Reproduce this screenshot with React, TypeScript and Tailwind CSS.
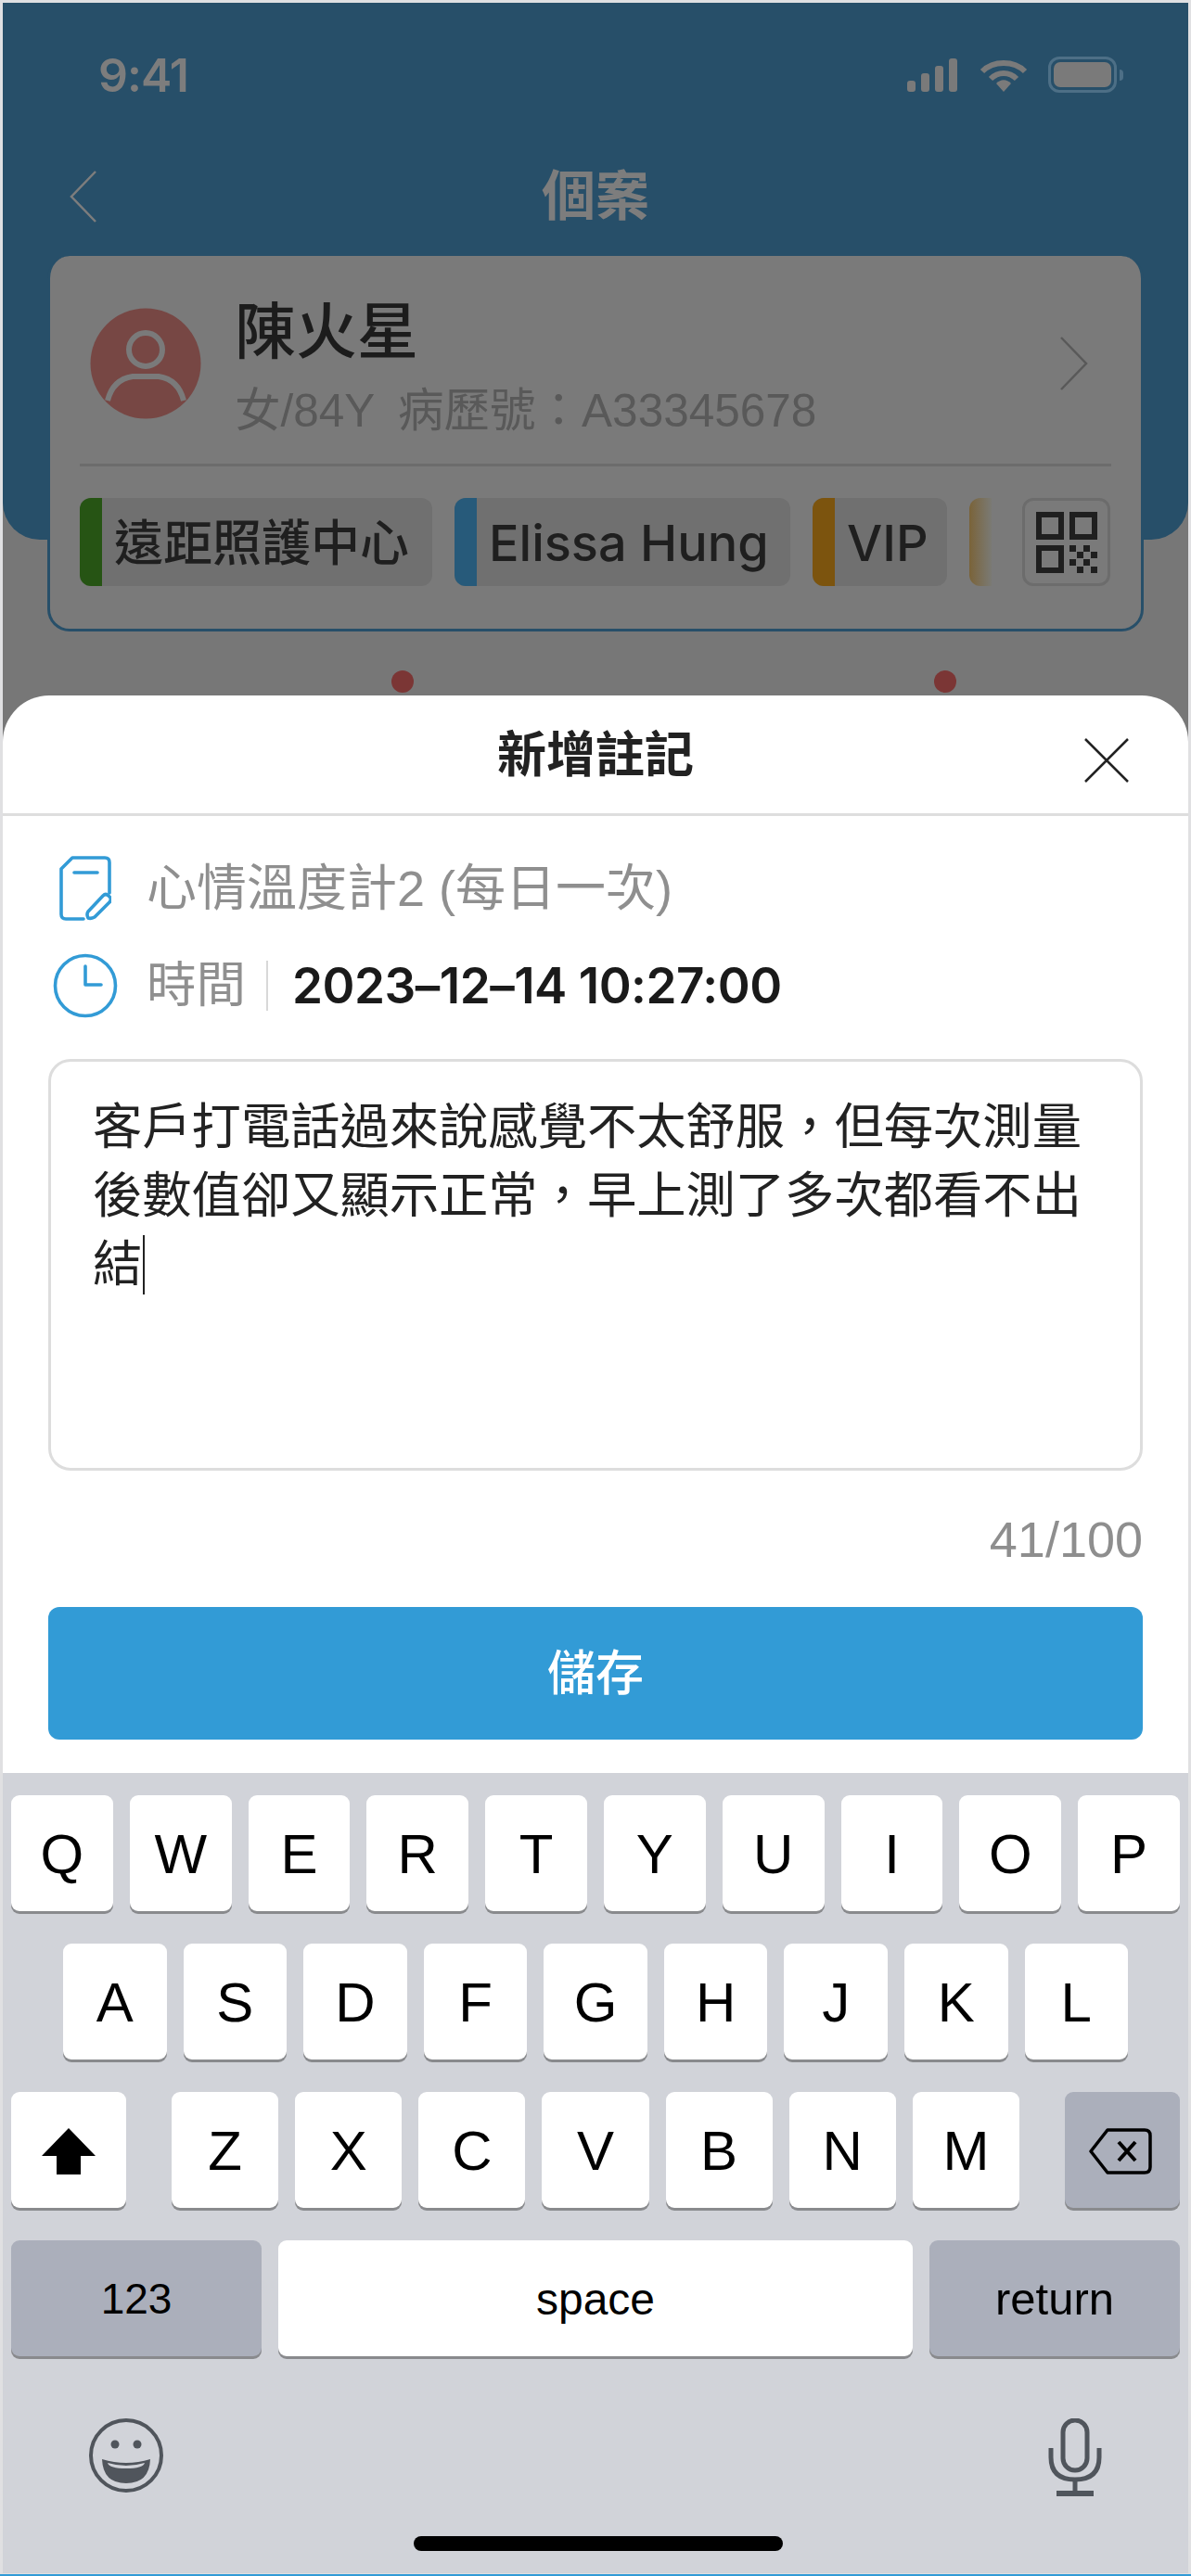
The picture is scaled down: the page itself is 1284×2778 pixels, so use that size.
import { ReactNode } from "react";

const sans = "font-['Liberation_Sans','Noto_Sans_CJK_TC',sans-serif]";

function Key({ children, className = "" }: { children: ReactNode; className?: string }) {
  return (
    <div className={`flex h-[125px] items-center justify-center rounded-[9px] pt-[2px] shadow-[0_3px_0_#898a8d] ${className}`}>
      {children}
    </div>
  );
}

function LetterKey({ letter }: { letter: string }) {
  return <Key className="flex-1 bg-white text-[60px] text-black">{letter}</Key>;
}

function Tag({ label, color, className = "" }: { label: string; color: string; className?: string }) {
  return (
    <div className={`flex h-[95px] items-center overflow-hidden rounded-[12px] bg-[#707070] ${className}`}>
      <span className={`h-full w-[24px] shrink-0 ${color}`} />
      <span className="pl-[13px] pt-[3px] font-['Inter','Noto_Sans_CJK_TC',sans-serif] font-medium leading-none text-[#1f1f1f]">{label}</span>
    </div>
  );
}

function StatusIcons() {
  return (
    <div className="flex items-center gap-[22px]">
      <svg width="56" height="36" viewBox="0 0 56 36" fill="#7a7a7a">
        <rect x="0" y="24" width="9" height="12" rx="3" />
        <rect x="15" y="16" width="9" height="20" rx="3" />
        <rect x="30" y="8" width="9" height="28" rx="3" />
        <rect x="45" y="0" width="9" height="36" rx="3" />
      </svg>
      <svg width="52" height="36" viewBox="0 0 52 36" fill="none" stroke="#7a7a7a" strokeWidth="6">
        <path d="M3 14 C15 2 37 2 49 14" />
        <path d="M12 22 C20 14 32 14 40 22" />
        <path d="M18 27 C23 22 29 22 34 27 L26 36 Z" fill="#7a7a7a" stroke="none" />
      </svg>
      <div className="flex items-center gap-[3px]">
        <div className="h-[39px] w-[74px] rounded-[12px] border-[3px] border-[#4d6f86] p-[3px]">
          <div className="h-full w-full rounded-[7px] bg-[#7a7a7a]" />
        </div>
        <div className="h-[12px] w-[4px] rounded-r-full bg-[#4d6f86]" />
      </div>
    </div>
  );
}

export default function App() {
  return (
    <div className={`h-[2778px] w-[1284px] overflow-hidden bg-[#e0e0e2] pt-[3px] ${sans}`}>
      <div className="mx-[3px] flex h-[2772px] flex-col overflow-hidden bg-[#777777]">
        {/* dimmed page behind the sheet */}
        <div className="relative h-[747px] shrink-0">
          <div className="absolute inset-x-0 top-0 h-[579px] rounded-b-[40px] bg-[#274f69]" />
          <div className="relative">
            <div className="flex h-[129px] items-center justify-between pl-[103px] pr-[70px] pt-[26px]">
              <span className="font-['Inter',sans-serif] text-[50px] font-semibold leading-none tracking-[-1px] text-[#7d7d7d]">9:41</span>
              <StatusIcons />
            </div>
            <div className="relative flex h-[144px] items-center justify-center pt-[16px]">
              <svg className="absolute left-[72px] top-[51px]" width="30" height="58" viewBox="0 0 30 58" fill="none" stroke="#7d7d7d" strokeWidth="2.5">
                <path d="M28 2 L2 29 L28 56" />
              </svg>
              <span className="text-[58px] font-bold leading-none text-[#7d7d7d]">個案</span>
            </div>
            <div className="mx-[48px] h-[405px] rounded-[24px] border-x-[3px] border-b-[3px] border-[#274f69] bg-[#7a7a7a] px-[32px] pt-[46px]">
              <div className="flex items-center border-b-[3px] border-[#6c6c6c] pb-[28px]">
                <div className="mb-[10px] ml-[11px] h-[120px] w-[120px] shrink-0">
                  <svg width="120" height="120" viewBox="0 0 120 120">
                    <circle cx="60" cy="60" r="59.5" fill="#774744" />
                    <circle cx="60" cy="45" r="18" fill="none" stroke="#7a7a7a" strokeWidth="6" />
                    <path d="M19 100 C23 84 33 76 46 74 H74 C87 76 97 84 101 100" fill="none" stroke="#7a7a7a" strokeWidth="6" />
                  </svg>
                </div>
                <div className="ml-[36px] flex-1">
                  <p className="text-[66px] font-medium leading-[72px] text-[#1c1c1c]">陳火星</p>
                  <p className="mt-[20px] text-[49.5px] leading-[58px] text-[#595959]">
                    女/84Y<span className="ml-[11px]"> 病歷號：A33345678</span>
                  </p>
                </div>
                <svg className="mb-[10px] mr-[24px]" width="32" height="60" viewBox="0 0 32 60" fill="none" stroke="#595959" strokeWidth="2.5">
                  <path d="M2 2 L29 30 L2 58" />
                </svg>
              </div>
              <div className="mt-[34px] flex items-start gap-[24px]">
                <Tag label="遠距照護中心" color="bg-[#265414]" className="w-[380px] text-[53px]" />
                <Tag label="Elissa Hung" color="bg-[#275a7a]" className="w-[362px] text-[54px]" />
                <Tag label="VIP" color="bg-[#7c540e]" className="w-[145px] text-[54px]" />
                <span className="h-[95px] w-[24px] rounded-l-[12px] bg-gradient-to-r from-[#7a6338] to-[#7a7a74]" />
                <div className="ml-[9px] flex h-[95px] w-[95px] items-center justify-center rounded-[12px] border-[3px] border-[#6c6c6c]">
                  <svg width="66" height="66" viewBox="0 0 66 66" fill="#1f1f1f">
                    <path fillRule="evenodd" d="M0 0h30v30H0z M6 6v18h18V6z M36 0h30v30H36z M42 6v18h18V6z M0 36h30v30H0z M6 42v18h18V42z" />
                    <path d="M36 36h7v7h-7z M51 36h7v7h-7z M44 43h7v7h-7z M59 43h7v7h-7z M36 51h7v7h-7z M51 51h7v7h-7z M44 59h7v7h-7z M59 59h7v7h-7z" />
                  </svg>
                </div>
              </div>
            </div>
            <div className="relative mt-[42px] h-[24px]">
              <span className="absolute left-[419px] h-[24px] w-[24px] rounded-full bg-[#7b3635]" />
              <span className="absolute left-[1004px] h-[24px] w-[24px] rounded-full bg-[#7b3635]" />
            </div>
          </div>
        </div>

        {/* sheet */}
        <div className="relative z-10 h-[1162px] shrink-0 rounded-t-[50px] bg-white">
          <div className="relative flex h-[130px] items-center justify-center border-b-[3px] border-[#dedede] pt-[2px]">
            <span className="text-[53px] font-bold leading-none text-[#222222]">新增註記</span>
            <svg className="absolute right-[62px] top-[44px]" width="52" height="52" viewBox="0 0 52 52" fill="none" stroke="#222222" strokeWidth="2.5">
              <path d="M3 3 L49 49 M49 3 L3 49" />
            </svg>
          </div>
          <div className="px-[49px]">
            <div className="mt-[42px] flex h-[72px] items-center">
              <svg className="ml-[12px]" width="56" height="70" viewBox="0 0 56 70" fill="none" stroke="#329bd6" strokeWidth="3.6" strokeLinecap="round" strokeLinejoin="round">
                <path d="M26 68 H7 Q2 68 2 63 V14 L14 2 H49 Q54 2 54 7 V40" />
                <path d="M16 18 H41" />
                <path d="M31 60 L47 43 Q50 40 53 43 L55 45 Q56 48 54 50 L38 66 Q34 68 31 67 Q29 63 31 60 Z" />
              </svg>
              <span className="ml-[38px] text-[54px] leading-none text-[#8f8f8f]">心情溫度計2 (每日一次)</span>
            </div>
            <div className="mt-[34px] flex h-[70px] items-center">
              <svg className="ml-[5px]" width="70" height="70" viewBox="0 0 70 70" fill="none" stroke="#329bd6" strokeWidth="3.6" strokeLinecap="round" strokeLinejoin="round">
                <circle cx="35" cy="35" r="32.5" />
                <path d="M35 14 V34 H52" />
              </svg>
              <span className="ml-[31px] text-[53.5px] leading-none text-[#8f8f8f]">時間</span>
              <span className="ml-[22px] h-[54px] w-[2px] bg-[#d8d8d8]" />
              <span className="ml-[26px] font-['Inter',sans-serif] text-[53px] font-semibold leading-none tracking-[-0.5px] text-[#1a1a1a]">2023–12–14 10:27:00</span>
            </div>
            <div className="mt-[44px] h-[444px] rounded-[24px] border-[3px] border-[#dddddd] px-[45px] pt-[34px] text-[53.3px] leading-[74px] text-[#222222]">
              <p>客戶打電話過來說感覺不太舒服，但每次測量</p>
              <p>後數值卻又顯示正常，早上測了多次都看不出</p>
              <p className="flex items-center">
                結<span className="ml-[1px] h-[64px] w-[2px] bg-[#222222]" />
              </p>
            </div>
            <p className="mt-[47px] text-right text-[54px] leading-none text-[#8e8e8e]">41/100</p>
            <div className="mt-[46px] flex h-[143px] items-center justify-center rounded-[12px] bg-[#329bd6] text-[52px] font-medium text-white">
              儲存
            </div>
          </div>
        </div>

        {/* keyboard */}
        <div className="relative flex-1 bg-[#d1d3d9] px-[9px] pt-[24px]">
          <div className="flex gap-[18px]">
            {"QWERTYUIOP".split("").map((l) => (
              <LetterKey key={l} letter={l} />
            ))}
          </div>
          <div className="mt-[35px] flex gap-[18px] px-[56px]">
            {"ASDFGHJKL".split("").map((l) => (
              <LetterKey key={l} letter={l} />
            ))}
          </div>
          <div className="mt-[35px] flex">
            <Key className="w-[124px] bg-white">
              <svg width="58" height="50" viewBox="0 0 58 50" fill="#000000">
                <path d="M29 0 L58 30 H42 V50 H16 V30 H0 Z" />
              </svg>
            </Key>
            <div className="mx-[49px] flex flex-1 gap-[18px]">
              {"ZXCVBNM".split("").map((l) => (
                <LetterKey key={l} letter={l} />
              ))}
            </div>
            <Key className="w-[124px] bg-[#abafbb]">
              <svg className="mr-[4px]" width="68" height="50" viewBox="0 0 68 50" fill="none" stroke="#000000" strokeWidth="3.5" strokeLinejoin="round">
                <path d="M20 2 H60 Q66 2 66 8 V42 Q66 48 60 48 H20 L2 25 Z" />
                <path d="M32 15 L50 35 M50 15 L32 35" strokeWidth="4" />
              </svg>
            </Key>
          </div>
          <div className="mt-[35px] flex gap-[18px] text-black">
            <Key className="w-[270px] bg-[#abafbb] text-[46px]">123</Key>
            <Key className="flex-1 bg-white text-[48px]">space</Key>
            <Key className="w-[270px] bg-[#abafbb] text-[49px]">return</Key>
          </div>
          <div className="mt-[67px] flex items-start justify-between pl-[84px] pr-[84px]">
            <svg width="80" height="80" viewBox="0 0 80 80" fill="none">
              <circle cx="40" cy="40" r="38" stroke="#50555c" strokeWidth="4" />
              <circle cx="28" cy="28" r="4.5" fill="#50555c" />
              <circle cx="52" cy="28" r="4.5" fill="#50555c" />
              <path d="M14 44 Q40 52 66 44 Q65 70 40 70 Q15 70 14 44 Z" fill="#50555c" />
              <path d="M20 48 Q40 54 60 48 Q58 54 40 54 Q22 54 20 48 Z" fill="#d1d3d9" />
            </svg>
            <svg width="58" height="84" viewBox="0 0 58 84" fill="none" stroke="#50555c" strokeWidth="5">
              <rect x="16" y="2" width="26" height="54" rx="13" />
              <path d="M3 32 V42 Q3 66 29 66 Q55 66 55 42 V32" />
              <path d="M29 66 V80" />
              <path d="M9 81 H49" strokeWidth="6" />
            </svg>
          </div>
          <div className="absolute bottom-[24px] left-[443px] h-[16px] w-[398px] rounded-full bg-black" />
        </div>
      </div>
      <div className="mt-[1px] h-[2px] bg-[#329bd6]" />
    </div>
  );
}
